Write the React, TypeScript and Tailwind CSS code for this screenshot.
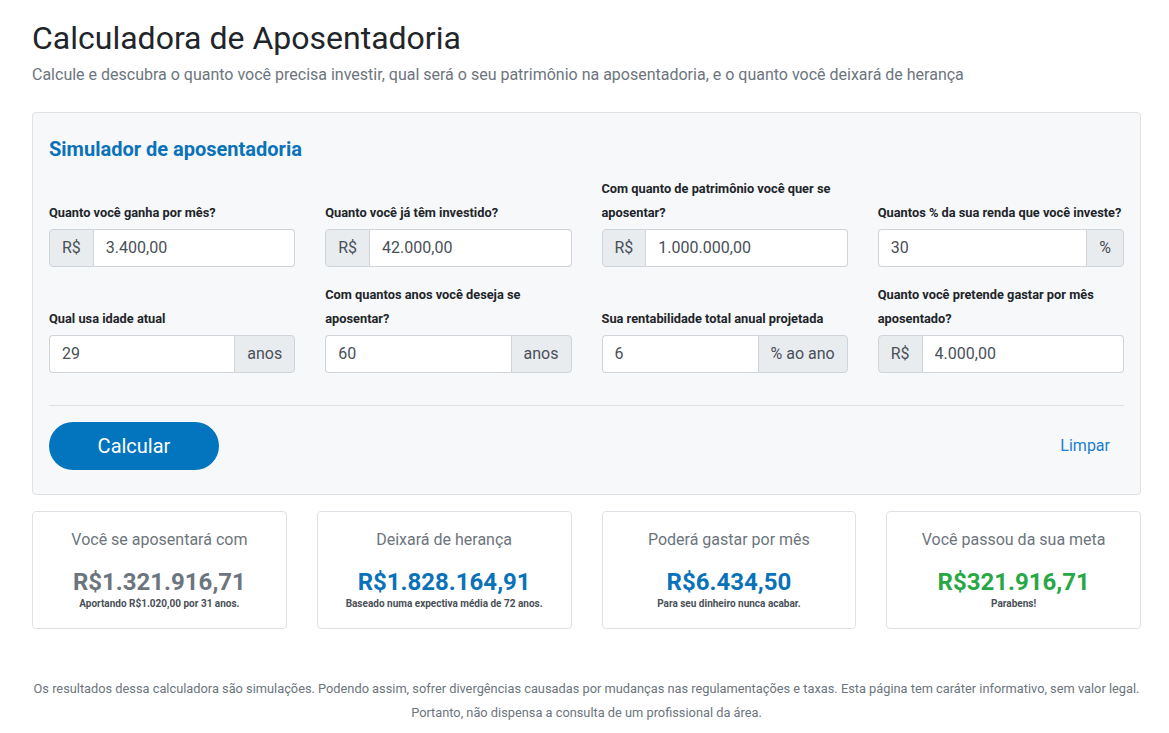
import React from 'react';

type Field = {
  label: string;
  value: string;
  prefix?: string;
  suffix?: string;
};

const row1: Field[] = [
  { label: 'Quanto você ganha por mês?', value: '3.400,00', prefix: 'R$' },
  { label: 'Quanto você já têm investido?', value: '42.000,00', prefix: 'R$' },
  { label: 'Com quanto de patrimônio você quer se aposentar?', value: '1.000.000,00', prefix: 'R$' },
  { label: 'Quantos % da sua renda que você investe?', value: '30', suffix: '%' },
];

const row2: Field[] = [
  { label: 'Qual usa idade atual', value: '29', suffix: 'anos' },
  { label: 'Com quantos anos você deseja se aposentar?', value: '60', suffix: 'anos' },
  { label: 'Sua rentabilidade total anual projetada', value: '6', suffix: '% ao ano' },
  { label: 'Quanto você pretende gastar por mês aposentado?', value: '4.000,00', prefix: 'R$' },
];

const results = [
  { title: 'Você se aposentará com', value: 'R$1.321.916,71', note: 'Aportando R$1.020,00 por 31 anos.', color: 'text-[#6c757d]' },
  { title: 'Deixará de herança', value: 'R$1.828.164,91', note: 'Baseado numa expectiva média de 72 anos.', color: 'text-[#0a72b8]' },
  { title: 'Poderá gastar por mês', value: 'R$6.434,50', note: 'Para seu dinheiro nunca acabar.', color: 'text-[#0a72b8]' },
  { title: 'Você passou da sua meta', value: 'R$321.916,71', note: 'Parabens!', color: 'text-[#28a745]' },
];

const InputGroup: React.FC<{ field: Field }> = ({ field }) => (
  <div className="flex flex-col justify-end">
    <label className="text-[12.8px] font-bold leading-[24px] text-[#212529] mb-1">{field.label}</label>
    <div className="flex h-[38px] text-[16px] text-[#495057]">
      {field.prefix && (
        <span className="flex items-center px-3 bg-[#e9ecef] border border-[#ced4da] rounded-l-[4px]">
          {field.prefix}
        </span>
      )}
      <input
        readOnly
        value={field.value}
        className={
          'flex-1 min-w-0 bg-white border border-[#ced4da] px-3 outline-none text-[#495057] ' +
          (field.prefix ? 'border-l-0 rounded-r-[4px]' : 'border-r-0 rounded-l-[4px]')
        }
      />
      {field.suffix && (
        <span className="flex items-center px-3 bg-[#e9ecef] border border-[#ced4da] rounded-r-[4px]">
          {field.suffix}
        </span>
      )}
    </div>
  </div>
);

export default function App() {
  return (
    <div className="min-h-screen bg-white font-['Roboto',sans-serif] text-[#212529]">
      <div className="w-[1109px] ml-[32px] pt-[19px] pb-4">
        <h1 className="text-[32px] leading-[38px] font-normal mb-[6px]">Calculadora de Aposentadoria</h1>
        <p className="text-[16px] leading-[24px] text-[#6c757d]">
          Calcule e descubra o quanto você precisa investir, qual será o seu patrimônio na aposentadoria, e o quanto você deixará de herança
        </p>

        <div className="mt-[25px] bg-[#f7f8fa] border border-[#dee2e6] rounded-[4px] px-4 pt-6 pb-6">
          <h2 className="text-[20px] leading-[24px] font-bold text-[#0a72b8]">Simulador de aposentadoria</h2>

          <div className="mt-4 grid grid-cols-4 gap-x-[30px] gap-y-4">
            {row1.map((f) => (
              <InputGroup key={f.label} field={f} />
            ))}
            {row2.map((f) => (
              <InputGroup key={f.label} field={f} />
            ))}
          </div>

          <hr className="mt-8 mb-4 border-0 border-t border-[#dee2e6]" />

          <div className="flex items-center justify-between">
            <button className="w-[170px] h-[48px] rounded-full bg-[#0275be] text-white text-[20px]">Calcular</button>
            <a className="text-[16px] text-[#1a7fd0] mr-[14px] cursor-pointer">Limpar</a>
          </div>
        </div>

        <div className="mt-[16px] grid grid-cols-4 gap-[30px]">
          {results.map((r) => (
            <div key={r.title} className="border border-[#dee2e6] rounded-[4px] bg-white text-center pt-[16px] pb-[17px]">
              <div className="text-[16px] leading-[24px] text-[#6c757d]">{r.title}</div>
              <div className={'mt-[15px] text-[24px] leading-[30px] font-bold ' + r.color}>{r.value}</div>
              <div className="text-[10px] leading-[14px] font-bold text-[#495057]">{r.note}</div>
            </div>
          ))}
        </div>

        <p className="mt-[48px] text-center text-[12.8px] leading-[24px] text-[#6c757d]">
          <span className="block whitespace-nowrap">
            Os resultados dessa calculadora são simulações. Podendo assim, sofrer divergências causadas por mudanças nas regulamentações e taxas. Esta página tem caráter informativo, sem valor legal.
          </span>
          <span className="block">Portanto, não dispensa a consulta de um profissional da área.</span>
        </p>
      </div>
    </div>
  );
}
